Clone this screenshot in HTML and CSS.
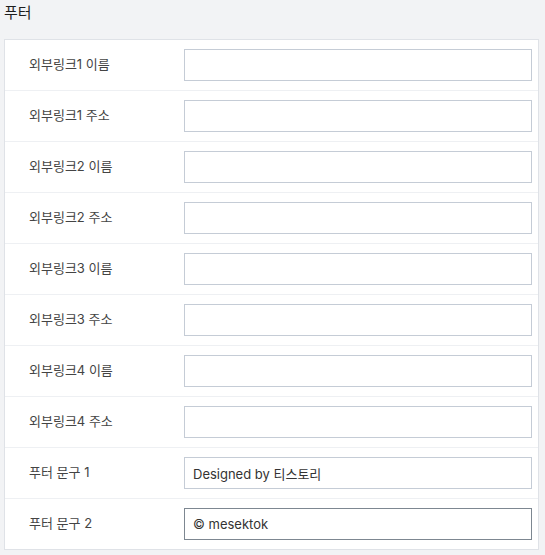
FILE: index.html
```html
<!DOCTYPE html>
<html lang="ko">
<head>
<meta charset="utf-8">
<link rel="stylesheet" href="styles.css">
</head>
<body>
<div class="page">
  <h2 class="title">푸터</h2>
  <div class="card">
    <div class="row"><label class="label">외부링크1 이름</label><input class="field" type="text" value=""></div>
    <div class="row"><label class="label">외부링크1 주소</label><input class="field" type="text" value=""></div>
    <div class="row"><label class="label">외부링크2 이름</label><input class="field" type="text" value=""></div>
    <div class="row"><label class="label">외부링크2 주소</label><input class="field" type="text" value=""></div>
    <div class="row"><label class="label">외부링크3 이름</label><input class="field" type="text" value=""></div>
    <div class="row"><label class="label">외부링크3 주소</label><input class="field" type="text" value=""></div>
    <div class="row"><label class="label">외부링크4 이름</label><input class="field" type="text" value=""></div>
    <div class="row"><label class="label">외부링크4 주소</label><input class="field" type="text" value=""></div>
    <div class="row"><label class="label">푸터 문구 1</label><input class="field" type="text" value="Designed by 티스토리"></div>
    <div class="row"><label class="label">푸터 문구 2</label><input class="field field-focus" type="text" value="© mesektok"></div>
  </div>
</div>
</body>
</html>
```
FILE: styles.css
```css
html, body {
  margin: 0;
  padding: 0;
  background: #f2f3f5;
  font-family: Inter, "Noto Sans CJK KR", sans-serif;
}
.page {
  padding: 0 6px 0 4px;
}
.title {
  margin: 0;
  height: 39px;
  padding-top: 4px;
  box-sizing: border-box;
  font-size: 15px;
  font-weight: 400;
  color: #1e1e1e;
  line-height: 18px;
}
.card {
  background: #fff;
  border: 1px solid #dfe2e7;
}
.row {
  display: flex;
  align-items: center;
  height: 50px;
  border-bottom: 1px solid #eef0f3;
  padding: 0 6px 0 24px;
}
.row:last-child {
  border-bottom: none;
}
.label {
  flex: 0 0 155px;
  font-size: 13px;
  line-height: 16px;
  margin-top: -3px;
  color: #444;
}
.field {
  flex: 1;
  height: 32px;
  box-sizing: border-box;
  border: 1px solid #c5ccd6;
  border-radius: 0;
  padding: 0 8px;
  font-family: Inter, "Noto Sans CJK KR", sans-serif;
  font-size: 13px;
  color: #333;
  outline: none;
  background: #fff;
}
.field-focus {
  border-color: #7d8791;
}
```
